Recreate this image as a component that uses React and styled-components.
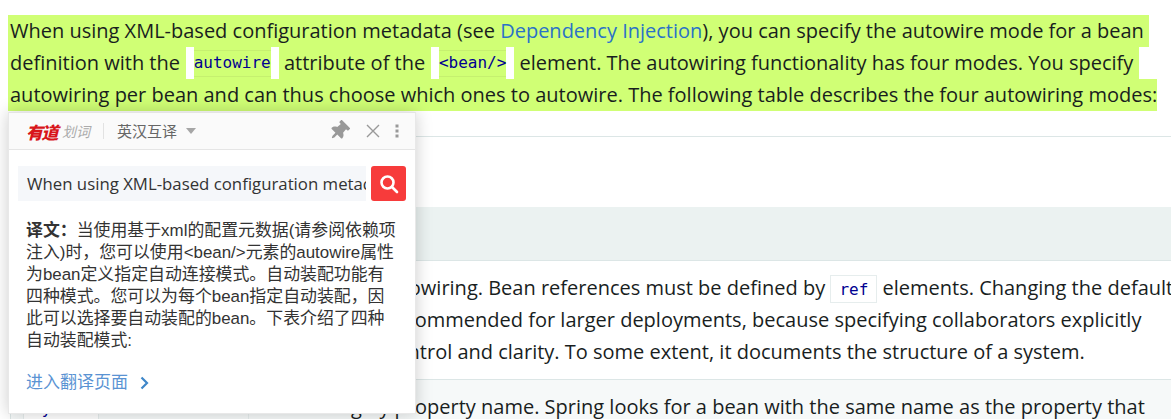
import React from 'react';
import styled, { createGlobalStyle } from 'styled-components';
import { FaThumbtack } from 'react-icons/fa';

const GlobalStyle = createGlobalStyle`
  html, body {
    margin: 0;
    padding: 0;
    background: #fff;
    overflow: hidden;
  }
  body {
    width: 1171px;
    height: 419px;
    font-family: "Open Sans", "Noto Sans", sans-serif;
    color: #191e1e;
  }
`;

const Page = styled.div`
  position: relative;
  width: 1171px;
  height: 419px;
  overflow: hidden;
  padding-top: 15px;
  box-sizing: border-box;
`;

const Intro = styled.div`
  padding-left: 8px;
  font-size: 20px;
`;

const SelectedLine = styled.div`
  width: fit-content;
  height: 32px;
  line-height: 32px;
  padding-left: 2px;
  background: #d0ff75;
  white-space: pre;
`;

const DocLink = styled.span`
  color: #2a72c8;
`;

const SelectedCode = styled.span`
  display: inline-block;
  vertical-align: top;
  height: 32px;
  margin-left: 0.5px;
  padding: 0 8px;
  background: #fff;
`;

const SelectedCodeText = styled.span`
  display: block;
  height: 32px;
  font-family: "DejaVu Sans Mono", monospace;
  font-size: 16px;
  line-height: 32px;
  color: #000091;
  background:
    linear-gradient(#c5f06f, #c5f06f) 0 3px / 100% 1px no-repeat,
    linear-gradient(#c5f06f, #c5f06f) 0 29px / 100% 1px no-repeat,
    #d0ff75;
`;

const Table = styled.div`
  margin: 25px 0 0 10px;
  border-top: 1px solid #dce6e6;
  padding-top: 70px;
  font-size: 20px;
`;

const HeadBand = styled.div`
  height: 53px;
  background: #ebf2f1;
  border-bottom: 1px solid #dce6e6;
`;

const Row = styled.div`
  display: grid;
  grid-template-columns: 238px 1fr;
  background: ${(p) => (p.$alt ? '#f6f9f9' : '#fff')};
  border-bottom: 1px solid #dce6e6;
`;

const Cell = styled.div`
  padding: 11px 0 11px 12px;
  border-left: ${(p) => (p.$first ? '1px solid #dce6e6' : '1px solid #e6eded')};
  box-sizing: border-box;
`;

const TextLine = styled.div`
  height: 32px;
  line-height: 32px;
  white-space: pre;
`;

const Code = styled.code`
  display: inline-block;
  height: 28px;
  line-height: 27px;
  padding: 0 8px;
  box-sizing: border-box;
  border: 1px solid #e6eded;
  background: #fff;
  font-family: "DejaVu Sans Mono", monospace;
  font-size: 16px;
  color: #000091;
`;

const Popup = styled.div`
  position: absolute;
  left: 8px;
  top: 112px;
  width: 408px;
  height: 302px;
  box-sizing: border-box;
  background: #fff;
  border: 1px solid #e8e8e8;
  border-top-color: #e4e4e4;
  box-shadow: 0 0 16px rgba(0, 0, 0, 0.2);
  font-family: "Liberation Sans", "Noto Sans CJK SC", sans-serif;
  color: #333;
`;

const PopupHead = styled.div`
  display: flex;
  align-items: center;
  height: 36px;
  padding: 0 16px 0 17px;
  background: #fafafa;
  border-bottom: 1px solid #e5e5e5;
`;

const Brand = styled.span`
  font-family: "Noto Sans CJK SC", sans-serif;
  font-size: 17px;
  font-weight: 900;
  font-style: italic;
  letter-spacing: -1.5px;
  color: #d8161b;
`;

const BrandSub = styled.span`
  margin-left: 5px;
  font-family: "Noto Sans CJK SC", sans-serif;
  font-size: 14px;
  font-style: italic;
  color: #ababab;
`;

const HeadDivider = styled.span`
  width: 1px;
  height: 16px;
  margin: 0 13px 0 13px;
  background: #e2e2e2;
`;

const LangPicker = styled.span`
  font-family: "Noto Sans CJK SC", sans-serif;
  font-size: 15px;
  margin-top: -1px;
  color: #666;
`;

const Caret = styled.span`
  width: 0;
  height: 0;
  margin: 0 0 0 9px;
  border-left: 5px solid transparent;
  border-right: 5px solid transparent;
  border-top: 6px solid #a6a6a6;
`;

const HeadActions = styled.div`
  display: flex;
  align-items: center;
  margin-left: auto;
  gap: 15px;
  color: #999;
`;

const PinIcon = styled(FaThumbtack)`
  margin-right: 2px;
  transform: rotate(45deg);
`;

const InputRow = styled.div`
  display: flex;
  gap: 5px;
  margin: 16px 9px 0;
`;

const QueryBox = styled.div`
  flex: 1;
  min-width: 0;
  height: 35px;
  line-height: 35px;
  padding-left: 9px;
  overflow: hidden;
  white-space: nowrap;
  background: #f5f7fa;
  font-family: "Open Sans", sans-serif;
  font-size: 16.8px;
  color: #333;
`;

const SearchButton = styled.div`
  display: flex;
  align-items: center;
  justify-content: center;
  width: 35px;
  height: 35px;
  border-radius: 3px;
  background: #f73b3b;
`;

const Translation = styled.div`
  margin: 19px 17px 0;
  font-size: 16.9px;
  line-height: 22px;
  white-space: nowrap;
`;

const MoreLink = styled.div`
  display: flex;
  align-items: center;
  margin: 20px 17px 0;
  font-size: 17px;
  line-height: 22px;
  color: #5a93d3;
`;

const Chevron = styled.svg`
  margin-left: 12px;
`;

export default function App() {
  return (
    <>
      <GlobalStyle />
      <Page>
        <Intro>
          <SelectedLine>
            When using XML-based configuration metadata (see <DocLink>Dependency Injection</DocLink>), you can specify the autowire mode for a bean{' '}
          </SelectedLine>
          <SelectedLine>
            definition with the <SelectedCode><SelectedCodeText>autowire</SelectedCodeText></SelectedCode> attribute of the <SelectedCode><SelectedCodeText>{'<bean/>'}</SelectedCodeText></SelectedCode> element. The autowiring functionality has four modes. You specify{' '}
          </SelectedLine>
          <SelectedLine>
            autowiring per bean and can thus choose which ones to autowire. The following table describes the four autowiring modes:
          </SelectedLine>
        </Intro>

        <Table>
          <HeadBand />
          <Row>
            <Cell $first />
            <Cell>
              <TextLine>(Default) No autowiring. Bean references must be defined by <Code>ref</Code> elements. Changing the default</TextLine>
              <TextLine>setting is not recommended for larger deployments, because specifying collaborators explicitly</TextLine>
              <TextLine>gives greater control and clarity. To some extent, it documents the structure of a system.</TextLine>
            </Cell>
          </Row>
          <Row $alt>
            <Cell $first>
              <TextLine><Code>byName</Code></TextLine>
            </Cell>
            <Cell>
              <TextLine>Autowiring by property name. Spring looks for a bean with the same name as the property that</TextLine>
            </Cell>
          </Row>
        </Table>

        <Popup>
          <PopupHead>
            <Brand>有道</Brand>
            <BrandSub>划词</BrandSub>
            <HeadDivider />
            <LangPicker>英汉互译</LangPicker>
            <Caret />
            <HeadActions>
              <PinIcon size={20} />
              <svg width="14" height="14" viewBox="0 0 14 14" fill="none" stroke="#999" strokeWidth="1.4">
                <path d="M1 1l12 12M13 1L1 13" />
              </svg>
              <svg width="4" height="14" viewBox="0 0 4 14" fill="#999">
                <rect x="0.5" y="0.5" width="3" height="3" />
                <rect x="0.5" y="5.5" width="3" height="3" />
                <rect x="0.5" y="10.5" width="3" height="3" />
              </svg>
            </HeadActions>
          </PopupHead>
          <InputRow>
            <QueryBox>When using XML-based configuration metadata (see Dependency Injection)</QueryBox>
            <SearchButton>
              <svg width="20" height="20" viewBox="0 0 20 20" fill="none" stroke="#fff" strokeWidth="2.6" strokeLinecap="round">
                <circle cx="8.5" cy="8.5" r="6" />
                <path d="M13 13l5 5" />
              </svg>
            </SearchButton>
          </InputRow>
          <Translation>
            <strong>译文：</strong>当使用基于xml的配置元数据(请参阅依赖项<br />
            注入)时，您可以使用&lt;bean/&gt;元素的autowire属性<br />
            为bean定义指定自动连接模式。自动装配功能有<br />
            四种模式。您可以为每个bean指定自动装配，因<br />
            此可以选择要自动装配的bean。下表介绍了四种<br />
            自动装配模式:
          </Translation>
          <MoreLink>
            进入翻译页面
            <Chevron width="9" height="14" viewBox="0 0 9 14" fill="none" stroke="#3f87c9" strokeWidth="2.2">
              <path d="M1.5 1.5L7 7l-5.5 5.5" />
            </Chevron>
          </MoreLink>
        </Popup>
      </Page>
    </>
  );
}
